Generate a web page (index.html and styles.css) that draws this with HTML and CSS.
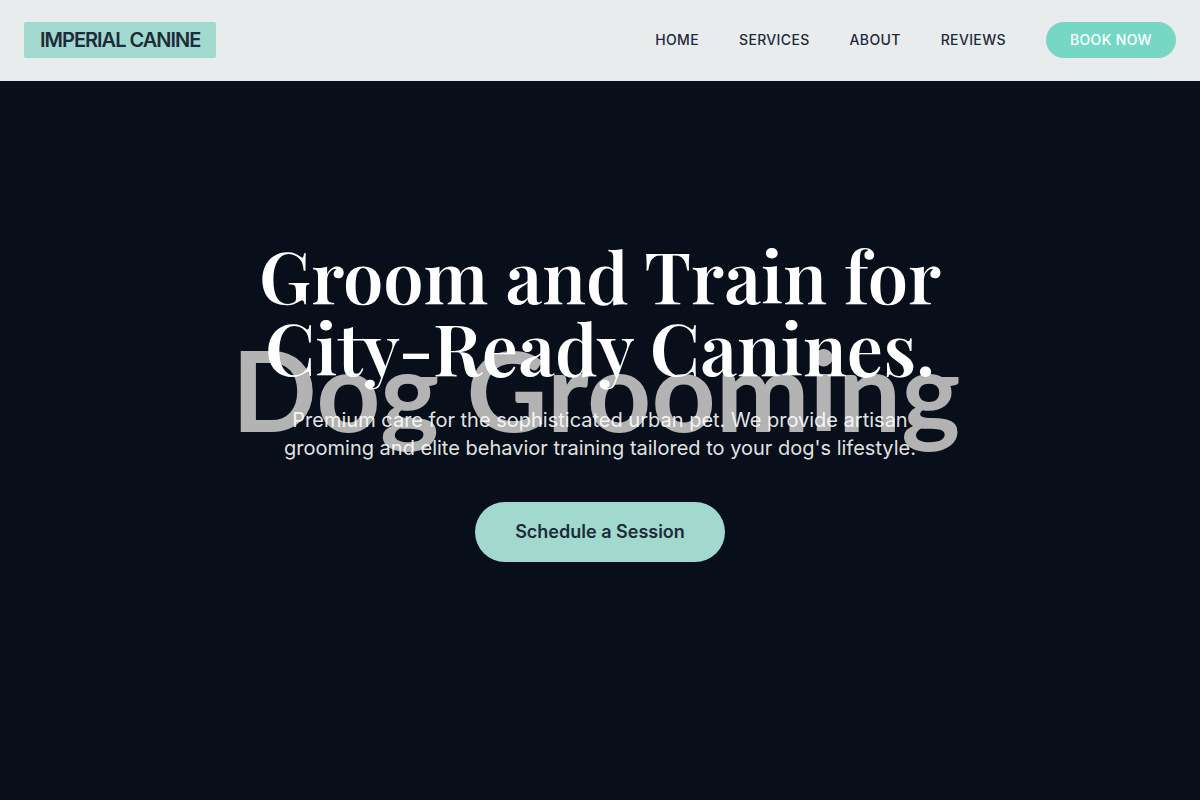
FILE: index.html
```
<!DOCTYPE html>
<html lang="en">
<head>
    <meta charset="UTF-8">
    <meta name="viewport" content="width=device-width, initial-scale=1.0">
    <title>Imperial Canine</title>
    <link rel="stylesheet" href="styles.css">
</head>
<body>
    <header class="navbar">
        <a href="#home" class="logo">IMPERIAL CANINE</a>
        <nav class="nav-links">
            <a href="#home">Home</a>
            <a href="#services">Services</a>
            <a href="#about">About</a>
            <a href="#reviews">Reviews</a>
            <a href="#book" class="btn-book">Book Now</a>
        </nav>
    </header>

    <main class="hero" id="home">
        <div class="hero-bg" aria-hidden="true">Dog Grooming</div>
        <div class="hero-content">
            <h1>Groom and Train for City-Ready Canines.</h1>
            <p>Premium care for the sophisticated urban pet. We provide artisan grooming and elite behavior training tailored to your dog's lifestyle.</p>
            <a href="#book" class="btn-primary">Schedule a Session</a>
        </div>
    </main>
</body>
</html>
```

FILE: styles.css
```
* {
    margin: 0;
    padding: 0;
    box-sizing: border-box;
}
body {
    display: flex;
    flex-direction: column;
    min-height: 100vh;
    font-family: Inter, sans-serif;
    background-color: #080f1a;
    color: #1e293b;
}
a {
    color: inherit;
    text-decoration: none;
}

/* Navigation */
.navbar {
    display: flex;
    justify-content: space-between;
    align-items: center;
    padding: 22px 24px;
    background-color: #e8eced;
    border-bottom: 1px solid #e2ebec;
}
.logo {
    padding: 4px 16px;
    border-radius: 2px;
    background-color: #a2d9ce;
    color: #1c2c3a;
    font-size: 20px;
    line-height: 28px;
    font-weight: 600;
    letter-spacing: -1px;
}
.nav-links {
    display: flex;
    align-items: center;
    gap: 40px;
    font-size: 14px;
    line-height: 20px;
    font-weight: 500;
    text-transform: uppercase;
    letter-spacing: 0.35px;
}
.btn-book {
    padding: 8px 24px;
    border-radius: 18px;
    background-color: #76d7c4;
    color: #fff;
}

/* Hero */
.hero {
    position: relative;
    flex: 1;
    display: flex;
    align-items: center;
    justify-content: center;
    padding: 0 24px 82px;
    text-align: center;
}
.hero-bg {
    position: absolute;
    inset: 0 8px 104px 0;
    display: flex;
    align-items: center;
    justify-content: center;
    color: #b3b3b3;
    font-family: Lato, sans-serif;
    font-size: 112px;
    font-weight: 700;
    white-space: nowrap;
}
.hero-content {
    position: relative;
    max-width: 768px;
}
.hero h1 {
    margin-bottom: 24px;
    color: #fff;
    font-family: "Playfair Display", "Liberation Serif", serif;
    font-size: 72px;
    line-height: 72px;
    font-weight: 600;
}
.hero p {
    max-width: 672px;
    margin: 0 auto 40px;
    color: rgba(255, 255, 255, 0.9);
    font-size: 20px;
    line-height: 28px;
}
.btn-primary {
    display: inline-block;
    padding: 16px 40px;
    border-radius: 30px;
    background-color: #a2d9ce;
    color: #1c2c3a;
    font-size: 18px;
    line-height: 28px;
    font-weight: 600;
}
```
